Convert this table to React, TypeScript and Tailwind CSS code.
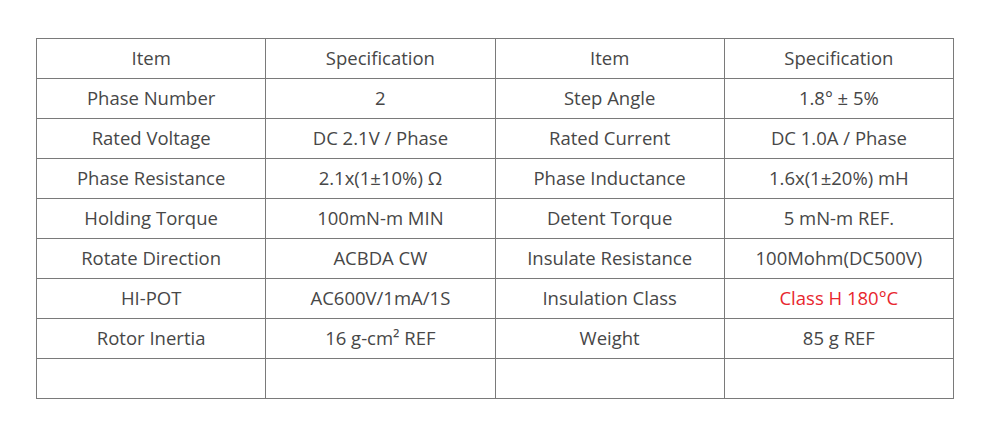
import React from "react";

const rows: [string, React.ReactNode, string, React.ReactNode][] = [
  ["Item", "Specification", "Item", "Specification"],
  ["Phase Number", "2", "Step Angle", "1.8° ± 5%"],
  ["Rated Voltage", "DC 2.1V / Phase", "Rated Current", "DC 1.0A / Phase"],
  ["Phase Resistance", "2.1x(1±10%) Ω", "Phase Inductance", "1.6x(1±20%) mH"],
  ["Holding Torque", "100mN-m MIN", "Detent Torque", "5 mN-m REF."],
  ["Rotate Direction", "ACBDA CW", "Insulate Resistance", "100Mohm(DC500V)"],
  ["HI-POT", "AC600V/1mA/1S", "Insulation Class", <span className="text-[#e8262e]">Class H 180°C</span>],
  ["Rotor Inertia", "16 g-cm² REF", "Weight", "85 g REF"],
  ["", "", "", ""],
];

export default function App() {
  return (
    <div className="w-[1000px] h-[429px] bg-white pt-[38px] pl-[36px]" style={{ fontFamily: '"Open Sans", sans-serif' }}>
      <table className="table-fixed border-collapse w-[918px] text-[#474747] text-[18.5px] font-normal">
        <tbody>
          {rows.map((r, i) => (
            <tr key={i} className="h-[40px]">
              {r.map((c, j) => (
                <td key={j} className="border-[1.5px] border-[#7a7a7a] text-center align-middle p-0 leading-none">
                  {c}
                </td>
              ))}
            </tr>
          ))}
        </tbody>
      </table>
    </div>
  );
}
